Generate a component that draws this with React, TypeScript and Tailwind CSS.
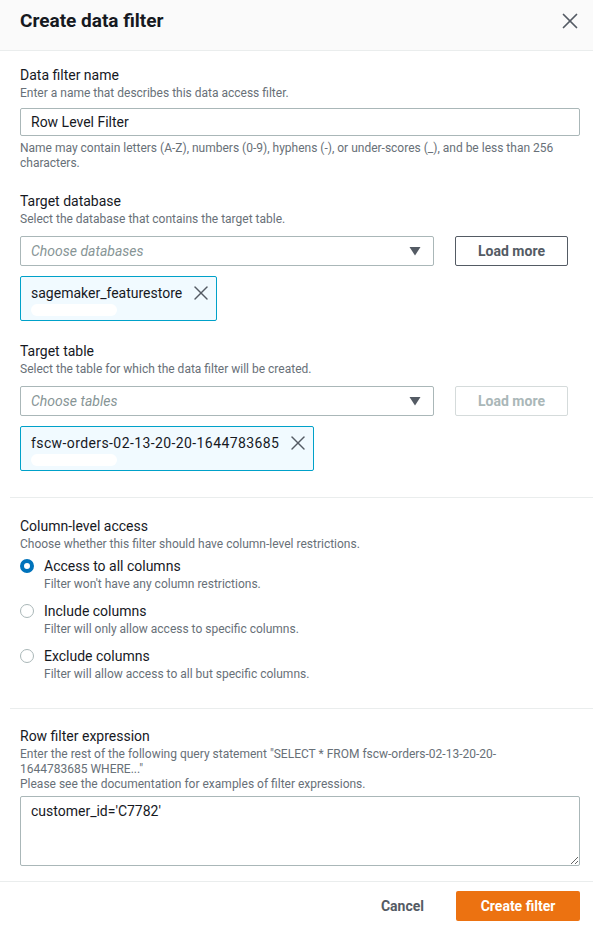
import { X } from "lucide-react";

function Label({ title, desc }: { title: string; desc?: React.ReactNode }) {
  return (
    <div>
      <div className="text-[14px] leading-[20px] text-[#16191f]">{title}</div>
      {desc && <div className="text-[12px] leading-[16px] text-[#687078]">{desc}</div>}
    </div>
  );
}

function Caret() {
  return (
    <svg width="12" height="12" viewBox="0 0 12 12">
      <polygon points="0.5,2 11.5,2 6,10.5" fill="#545b64" />
    </svg>
  );
}

function SelectRow({ placeholder, disabled }: { placeholder: string; disabled?: boolean }) {
  return (
    <div className="flex items-center gap-[21px] mt-[9px]">
      <div className="flex-1 h-[30px] border border-[#aab7b8] rounded-[2px] flex items-center justify-between pl-[10px] pr-[12px]">
        <span className="italic text-[14px] text-[#879596]">{placeholder}</span>
        <Caret />
      </div>
      <button
        className={
          disabled
            ? "w-[113px] h-[30px] border border-[#d5dbdb] rounded-[2px] text-[14px] font-bold text-[#aab7b8] mr-[12px]"
            : "w-[113px] h-[30px] border border-[#545b64] rounded-[2px] text-[14px] font-bold text-[#545b64] mr-[12px]"
        }
      >
        Load more
      </button>
    </div>
  );
}

function Token({ label, wide }: { label: string; wide?: boolean }) {
  return (
    <div className="inline-flex flex-col mt-[10px] border border-[#00a1c9] bg-[#f1faff] rounded-[2px] pl-[10px] pr-[3px] pt-[5px] pb-[4px]">
      <div className="flex items-center gap-[7px] h-[21px]">
        <span className={wide ? "text-[14px] leading-[20px] text-[#16191f] tracking-[0.4px]" : "text-[14px] leading-[20px] text-[#16191f]"}>
          {label}
        </span>
        <X size={24} strokeWidth={1.4} className="text-[#545b64]" />
      </div>
      <div className="mt-[1px] h-[12px] w-[86px] rounded-full bg-white" />
    </div>
  );
}

function Radio({ checked, title, desc }: { checked?: boolean; title: string; desc: string }) {
  return (
    <div className="flex gap-[10px] items-start">
      <div className="pt-[3px]">
        {checked ? (
          <div className="w-[14px] h-[14px] rounded-full border-[4px] border-[#0073bb] bg-white" />
        ) : (
          <div className="w-[14px] h-[14px] rounded-full border border-[#aab7b8] bg-white" />
        )}
      </div>
      <div>
        <div className="text-[14px] leading-[20px] text-[#16191f]">{title}</div>
        <div className="text-[12px] leading-[16px] text-[#687078]">{desc}</div>
      </div>
    </div>
  );
}

export default function App() {
  return (
    <div className="w-[593px] h-[930px] bg-white overflow-hidden font-['Roboto',sans-serif] text-[#16191f]">
      {/* Header */}
      <div className="h-[51px] bg-[#fafafa] border-b border-[#eaeded] flex items-start justify-between pl-[20px] pr-[10px] pt-[9px]">
        <h1 className="text-[19px] leading-[24px] font-bold text-[#16191f]">Create data filter</h1>
        <X size={26} strokeWidth={1.6} className="text-[#545b64] -mt-[1px]" />
      </div>

      {/* Name + targets */}
      <div className="pl-[20px] pr-[13px] pt-[14px] pb-[26px]">
        <Label title="Data filter name" desc="Enter a name that describes this data access filter." />
        <div className="mt-[7px] h-[28px] border border-[#aab7b8] rounded-[2px] flex items-center px-[10px] text-[14px]">
          Row Level Filter
        </div>
        <div className="mt-[5px] text-[12px] leading-[15px] text-[#687078] pr-[10px]">
          Name may contain letters (A-Z), numbers (0-9), hyphens (-), or under-scores (_), and be less than 256 characters.
        </div>

        <div className="mt-[20px]">
          <Label title="Target database" desc="Select the database that contains the target table." />
          <SelectRow placeholder="Choose databases" />
          <Token label="sagemaker_featurestore" />
        </div>

        <div className="mt-[20px]">
          <Label title="Target table" desc="Select the table for which the data filter will be created." />
          <SelectRow placeholder="Choose tables" disabled />
          <Token label="fscw-orders-02-13-20-20-1644783685" wide />
        </div>
      </div>

      {/* Column-level access */}
      <div className="ml-[10px] border-t border-[#eaeded]">
        <div className="pl-[10px] pr-[13px] pt-[18px] pb-[26px]">
          <Label title="Column-level access" desc="Choose whether this filter should have column-level restrictions." />
          <div className="mt-[4px] flex flex-col gap-[9px]">
            <Radio checked title="Access to all columns" desc="Filter won't have any column restrictions." />
            <Radio title="Include columns" desc="Filter will only allow access to specific columns." />
            <Radio title="Exclude columns" desc="Filter will allow access to all but specific columns." />
          </div>
        </div>
      </div>

      {/* Row filter */}
      <div className="ml-[10px] border-t border-[#eaeded]">
        <div className="pl-[10px] pr-[13px] pt-[17px] pb-[15px]">
          <div className="text-[14px] leading-[20px] text-[#16191f]">Row filter expression</div>
          <div className="mt-[1px] text-[12px] leading-[15px] text-[#687078]">
            <div className="pr-[70px]">
              Enter the rest of the following query statement "SELECT * FROM fscw-orders-02-13-20-20-1644783685 WHERE..."
            </div>
            <div>Please see the documentation for examples of filter expressions.</div>
          </div>
          <textarea
            className="mt-[4px] block w-full h-[70px] border border-[#aab7b8] rounded-[2px] px-[10px] py-[4px] text-[14px] text-[#16191f] outline-none"
            defaultValue="customer_id='C7782'"
          />
        </div>
      </div>

      {/* Footer */}
      <div className="border-t border-[#eaeded] flex items-center justify-end gap-[16px] pt-[9px] pr-[13px]">
        <button className="px-[16px] h-[30px] text-[14px] font-bold text-[#545b64]">Cancel</button>
        <button className="w-[124px] h-[30px] rounded-[2px] bg-[#ec7211] text-[14px] font-bold text-white">
          Create filter
        </button>
      </div>
    </div>
  );
}
